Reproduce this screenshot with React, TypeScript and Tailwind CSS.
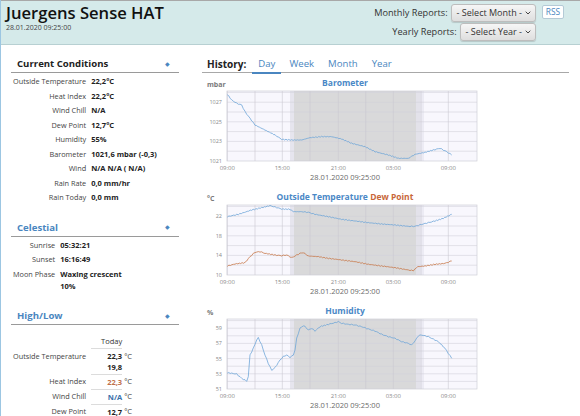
import type { ReactNode } from "react";

// ─── chart data (points are [x, y] in plot pixels) ──────────────────────
type Pt = [number, number];

const toPts = (raw: number[], shift: number): Pt[] => {
  const out: Pt[] = [];
  for (let i = 0; i < raw.length; i += 2) {
    out.push([raw[i] / 3 - 7, raw[i + 1] / 3 - shift]);
  }
  return out;
};

const BARO = toPts(
  [
    97, 58, 110, 75, 125, 85, 140, 90, 150, 110, 165, 130, 180, 150, 210, 165, 240, 180, 260, 193, 290, 195,
    320, 195, 345, 188, 380, 185, 410, 185, 440, 192, 470, 205, 510, 215, 540, 230, 580, 240, 610, 250, 640, 250,
    660, 238, 690, 232, 715, 225, 735, 220, 755, 230, 770, 240,
  ],
  15
);

const TEMP = toPts(
  [
    97, 95, 130, 88, 170, 75, 200, 68, 225, 62, 240, 66, 260, 72, 285, 73, 295, 80, 320, 80, 340, 82, 360, 88,
    400, 95, 440, 103, 480, 108, 520, 113, 560, 117, 600, 120, 640, 124, 660, 124, 680, 118, 700, 113, 720, 108,
    745, 100, 770, 88,
  ],
  19
);

const DEW = toPts(
  [
    97, 243, 120, 237, 150, 233, 165, 215, 180, 202, 195, 200, 210, 205, 240, 210, 260, 212, 275, 210, 290, 218,
    300, 213, 315, 205, 325, 203, 340, 213, 370, 215, 400, 220, 440, 225, 480, 230, 520, 238, 560, 243, 600, 248,
    640, 255, 655, 257, 668, 245, 690, 243, 720, 238, 750, 235, 770, 228,
  ],
  19
);

const HUM = toPts(
  [
    97, 233, 110, 235, 125, 237, 140, 250, 155, 258, 160, 245, 165, 180, 175, 160, 185, 135, 190, 128, 200, 150,
    210, 180, 220, 205, 230, 226, 240, 218, 255, 195, 265, 185, 275, 180, 285, 187, 295, 180, 300, 165, 305, 130,
    315, 100, 325, 92, 330, 95, 340, 105, 350, 100, 360, 108, 375, 95, 400, 88, 420, 83, 430, 80, 440, 85, 460, 88,
    480, 90, 500, 95, 520, 102, 540, 108, 560, 118, 580, 125, 600, 130, 620, 140, 640, 145, 650, 150, 660, 138,
    670, 122, 680, 120, 700, 125, 710, 130, 730, 140, 750, 160, 760, 175, 770, 190,
  ],
  23
);

// a little wobble so the lines look like real samples
function jitter(pts: Pt[]): string {
  const dense: Pt[] = [];
  for (let i = 0; i < pts.length - 1; i++) {
    const [x1, y1] = pts[i];
    const [x2, y2] = pts[i + 1];
    const steps = Math.max(1, Math.round((x2 - x1) / 1.5));
    for (let s = 0; s < steps; s++) {
      const t = s / steps;
      const n = Math.sin((x1 + t * (x2 - x1)) * 2.3) * 0.45;
      dense.push([x1 + t * (x2 - x1), y1 + t * (y2 - y1) + n]);
    }
  }
  dense.push(pts[pts.length - 1]);
  return dense.map((p, i) => `${i === 0 ? "M" : "L"}${p[0].toFixed(1)} ${p[1].toFixed(1)}`).join(" ");
}

const V_LINES = [25.3, 53, 80.3, 108, 136.3, 163.7, 191.3, 219, 246.3];
const X_LABELS: [number, string][] = [
  [25.3, "09:00"],
  [80.3, "15:00"],
  [136.3, "21:00"],
  [191.3, "03:00"],
  [246.3, "09:00"],
];

interface ChartProps {
  title: ReactNode;
  unit: string;
  step: number;
  lines: number;
  yLabels: [number, string][];
  series: { d: string; color: string }[];
}

function Chart({ title, unit, step, lines, yLabels, series }: ChartProps) {
  const top = 1;
  const bottom = 71;
  return (
    <div className="flex w-[286px] flex-col">
      <div className="grid h-[14px] grid-cols-[40px_1fr_40px]">
        <span className="pl-[5px] pt-[5px] text-[7px] font-bold leading-[8px] text-[#7a7a7a]">{unit}</span>
        <span className="text-center text-[8.5px] font-bold leading-[14px]">{title}</span>
        <span />
      </div>
      <svg width={286} height={82} viewBox="0 0 286 82" className="block">
        <rect x={25} y={top} width={250} height={bottom - top} fill="#f8f7fd" />
        <rect x={88} y={top} width={7} height={bottom - top} fill="#e6e5ee" />
        <rect x={92} y={top} width={122} height={bottom - top} fill="#d9d9da" />
        <rect x={214} y={top} width={4} height={bottom - top} fill="#e3e2ea" />
        <rect x={218} y={top} width={4} height={bottom - top} fill="#ecebf4" />
        {Array.from({ length: lines }, (_, k) => (
          <line key={k} x1={25} x2={275} y1={bottom - (k + 1) * step} y2={bottom - (k + 1) * step} stroke="#d2d1da" strokeWidth={0.6} />
        ))}
        {V_LINES.map((x) => (
          <line key={x} x1={x} x2={x} y1={top} y2={bottom} stroke="#c9c8d0" strokeWidth={0.6} />
        ))}
        <rect x={25} y={top} width={250} height={bottom - top} fill="none" stroke="#cfcfd6" strokeWidth={0.7} />
        {yLabels.map(([y, t]) => (
          <text key={t} x={20} y={y + 2} textAnchor="end" fontSize={5.5} fill="#8a8a8a" fontFamily="'Open Sans', sans-serif">
            {t}
          </text>
        ))}
        {X_LABELS.map(([x, t], i) => (
          <text key={i} x={x} y={80} textAnchor="middle" fontSize={6} fill="#8a8a8a" fontFamily="'Open Sans', sans-serif">
            {t}
          </text>
        ))}
        {series.map((s, i) => (
          <path key={i} d={s.d} fill="none" stroke={s.color} strokeWidth={0.8} strokeLinejoin="round" />
        ))}
      </svg>
      <div className="text-center text-[7.5px] leading-[10px] text-[#6a6a6a]">28.01.2020 09:25:00</div>
    </div>
  );
}

// ─── left column bits ────────────────────────────────────────────────
function SectionHead({ title, blue }: { title: string; blue?: boolean }) {
  return (
    <div className="flex h-[17px] items-center justify-between border-b border-[#9a9a9a] pl-[6px] pr-[9px]">
      <span className={`text-[9.6px] font-bold leading-[16px] ${blue ? "text-[#4a86c0]" : "text-[#222]"}`}>{title}</span>
      <span className="text-[6px] text-[#4a86c0]">◆</span>
    </div>
  );
}

function Rows({ rows }: { rows: [string, ReactNode][] }) {
  return (
    <div className="grid grid-cols-[auto_1fr] gap-x-[5px] pt-[1px] pl-[2px]">
      {rows.map(([l, v]) => (
        <div key={l} className="contents">
          <span className="whitespace-nowrap py-[1.25px] text-right text-[7.3px] leading-[12px] text-[#444]">{l}</span>
          <span className="py-[1.25px] text-[7.5px] font-bold leading-[12px] text-[#222]">{v}</span>
        </div>
      ))}
    </div>
  );
}

function SelectBtn({ label }: { label: string }) {
  return (
    <div className="flex h-[18px] items-center gap-[3px] rounded-[3px] border border-[#bdbdbd] bg-gradient-to-b from-[#f6f6f6] to-[#dedede] pl-[5px] pr-[4px] text-[9px] text-[#333] shadow-[0_1px_1px_rgba(0,0,0,0.15)]">
      <span>{label}</span>
      <svg width="6" height="4" viewBox="0 0 6 4">
        <path d="M0.7 0.7 L3 3 L5.3 0.7" fill="none" stroke="#444" strokeWidth="1" />
      </svg>
    </div>
  );
}

function HLRow({ label, value, color, first }: { label: string; value: ReactNode; color?: string; first?: boolean }) {
  return (
    <>
      <span className="whitespace-nowrap py-[1.5px] text-right text-[7.3px] text-[#444]">{label}</span>
      <span className={`py-[1.5px] text-right font-bold ${first ? "" : "border-t border-[#dcdcdc]"} ${color ?? "text-[#222]"}`}>
        {value}
      </span>
      <span className="-ml-[3px] py-[1.5px] text-[#444]">°C</span>
    </>
  );
}

export default function App() {
  return (
    <div
      className="h-[416px] w-[580px] overflow-hidden border-l border-[#9cc6e2] bg-white text-[#222]"
      style={{ fontFamily: "'Open Sans', 'Noto Sans', sans-serif" }}
    >
      {/* Header */}
      <div className="flex h-[45px] justify-between border-t border-b border-t-[#a8a8a8] border-b-[#b7d0d2] bg-[#d5eaea]">
        <div className="pl-[5px] pt-[3px]">
          <div className="text-[16.6px] font-semibold leading-[18px] text-[#111]">Juergens Sense HAT</div>
          <div className="mt-[2px] text-[7px] leading-[8px] text-[#444]">28.01.2020 09:25:00</div>
        </div>
        <div className="flex items-start gap-[6px] pr-[16px] pt-[3px]">
          <div className="flex flex-col items-end gap-[1px]">
            <div className="flex items-center gap-[3px]">
              <span className="text-[9.2px] text-[#333]">Monthly Reports:</span>
              <SelectBtn label="- Select Month -" />
            </div>
            <div className="flex items-center gap-[3px]">
              <span className="text-[9.2px] text-[#333]">Yearly Reports:</span>
              <SelectBtn label="- Select Year -" />
            </div>
          </div>
          <div className="mt-[1px] flex h-[14px] w-[22px] items-center justify-center rounded-[2px] border border-[#b4cad6] bg-white text-[8.4px] leading-[12px] text-[#4a86c0]">
            RSS
          </div>
        </div>
      </div>

      {/* Body */}
      <div className="flex">
        <div className="ml-[10px] w-[168px] pt-[11px]">
          <SectionHead title="Current Conditions" />
          <Rows
            rows={[
              ["Outside Temperature", "22,2°C"],
              ["Heat Index", "22,2°C"],
              ["Wind Chill", "N/A"],
              ["Dew Point", "12,7°C"],
              ["Humidity", "55%"],
              ["Barometer", "1021,6 mbar (-0,3)"],
              ["Wind", "N/A N/A ( N/A)"],
              ["Rain Rate", "0,0 mm/hr"],
              ["Rain Today", "0,0 mm"],
            ]}
          />

          <div className="mt-[15px]">
            <SectionHead title="Celestial" blue />
            <Rows
              rows={[
                ["Sunrise", "05:32:21"],
                ["Sunset", "16:16:49"],
                [
                  "Moon Phase",
                  <>
                    Waxing crescent
                    <br />
                    10%
                  </>,
                ],
              ]}
            />
          </div>

          <div className="mt-[15px]">
            <SectionHead title="High/Low" blue />
            <div className="grid grid-cols-[auto_31px_1fr] gap-x-[5px] pl-[2px] pt-[9px] text-[7.5px] leading-[11px]">
              <span />
              <span className="border-b border-[#dcdcdc] py-[1.5px] text-right text-[#333]">Today</span>
              <span />
              <HLRow
                label="Outside Temperature"
                first
                value={
                  <>
                    22,3
                    <br />
                    19,8
                  </>
                }
              />
              <HLRow label="Heat Index" value="22,3" color="text-[#c0704a]" />
              <HLRow label="Wind Chill" value="N/A" color="text-[#3a70aa]" />
              <HLRow label="Dew Point" value="12,7" />
            </div>
          </div>
        </div>

        <div className="ml-[23px] w-[367px] pt-[11px]">
          <div className="flex h-[17px] items-end border-b border-[#a8a8a8] pl-[5px]">
            <span className="mr-[6px] text-[10px] font-bold leading-[16px]">History:</span>
            <span className="-mb-[2px] border-b-2 border-[#4a86c0] px-[6px] text-[9.6px] leading-[16px] text-[#4a86c0]">Day</span>
            <span className="ml-[8px] text-[9.6px] leading-[16px] text-[#4a86c0]">Week</span>
            <span className="ml-[14px] text-[9.6px] leading-[16px] text-[#4a86c0]">Month</span>
            <span className="ml-[14px] text-[9.6px] leading-[16px] text-[#4a86c0]">Year</span>
          </div>
          <div className="flex flex-col gap-[8px] pt-[3px]">
            <Chart
              title={<span className="text-[#4a88c6]">Barometer</span>}
              unit="mbar"
              step={9.8}
              lines={7}
              yLabels={[
                [12.2, "1027"],
                [31.8, "1025"],
                [51.4, "1023"],
                [71, "1021"],
              ]}
              series={[{ d: jitter(BARO), color: "#6fa6d8" }]}
            />
            <Chart
              title={
                <>
                  <span className="text-[#4a88c6]">Outside Temperature</span> <span className="text-[#c8673a]">Dew Point</span>
                </>
              }
              unit="°C"
              step={9.8}
              lines={7}
              yLabels={[
                [12.2, "22"],
                [31.8, "18"],
                [51.4, "14"],
                [71, "10"],
              ]}
              series={[
                { d: jitter(TEMP), color: "#6fa6d8" },
                { d: jitter(DEW), color: "#c8794a" },
              ]}
            />
            <Chart
              title={<span className="text-[#4a88c6]">Humidity</span>}
              unit="%"
              step={7.6}
              lines={9}
              yLabels={[
                [10.2, "59"],
                [25.4, "57"],
                [40.6, "55"],
                [55.8, "53"],
                [71, "51"],
              ]}
              series={[{ d: jitter(HUM), color: "#6fa6d8" }]}
            />
          </div>
        </div>
      </div>
    </div>
  );
}
